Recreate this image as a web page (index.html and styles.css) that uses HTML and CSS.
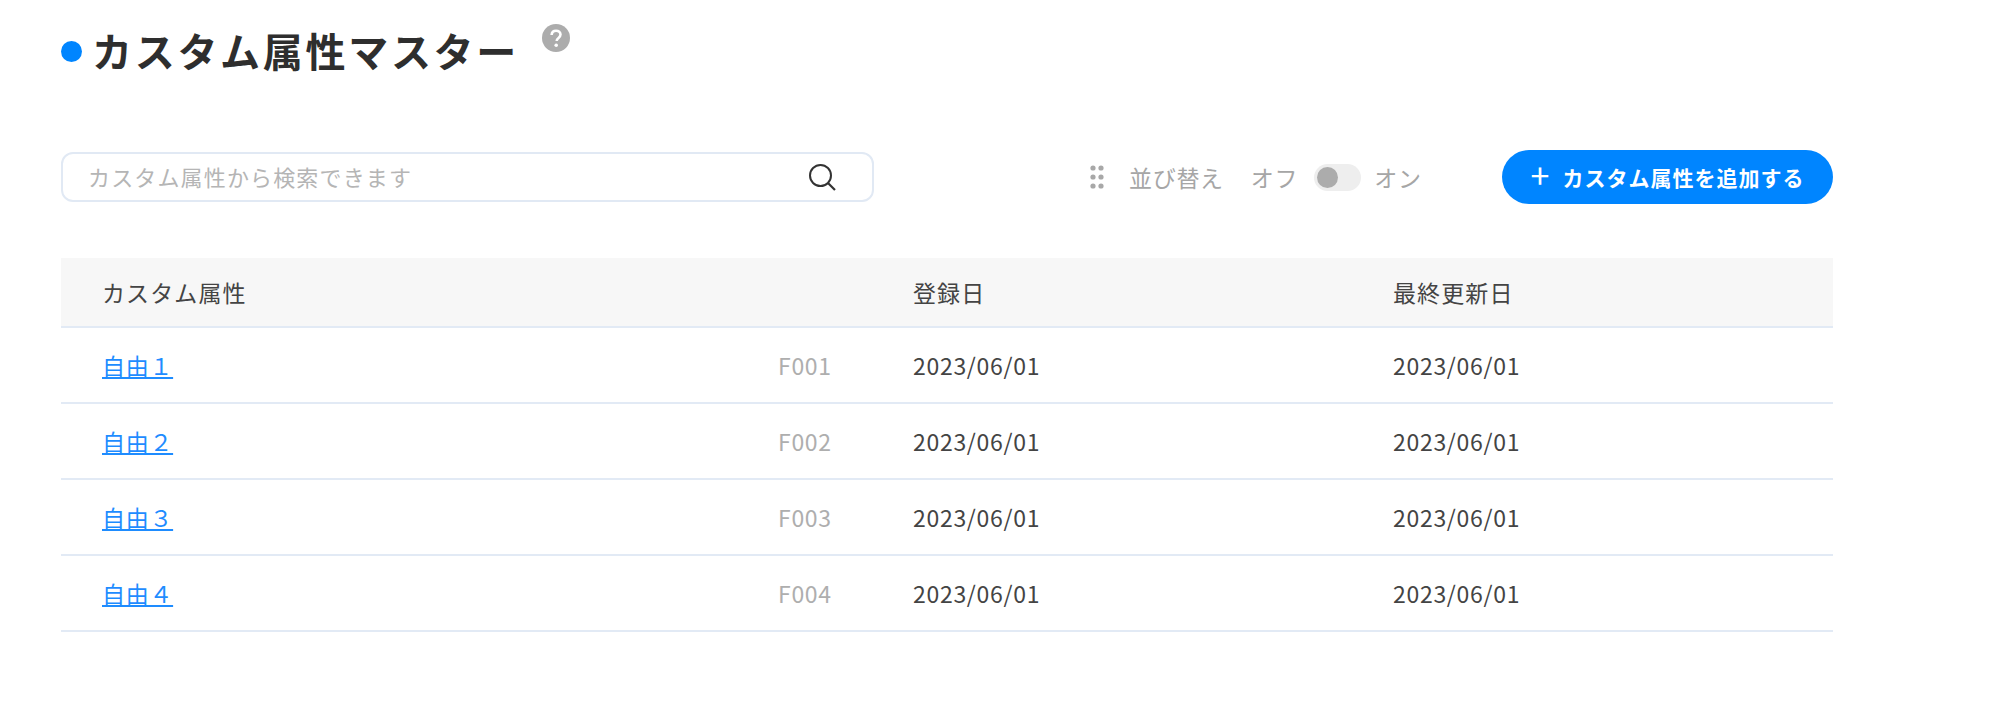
FILE: index.html
```html
<!DOCTYPE html>
<html lang="ja">
<head>
<meta charset="utf-8">
<title>カスタム属性マスター</title>
<link rel="stylesheet" href="styles.css">
</head>
<body>
<main class="page">
  <header class="title-row">
    <span class="dot"></span>
    <h1 class="title">カスタム属性マスター</h1>
    <svg class="help" viewBox="0 0 28 28" width="28" height="28"><circle cx="14" cy="14" r="14" fill="#acacac"/><path d="M9.6 11c.2-2.7 2-4.2 4.5-4.2s4.4 1.500 4.400 3.800c0 1.800-1 2.700-2.200 3.600-1.100.8-1.600 1.400-1.600 2.800" fill="none" stroke="#fff" stroke-width="2.600"/><circle cx="14.200" cy="21.200" r="1.800" fill="#fff"/></svg>
  </header>
  <section class="toolbar">
    <div class="search">
      <span class="placeholder">カスタム属性から検索できます</span>
      <svg class="search-icon" viewBox="0 0 30 30" width="30" height="30"><circle cx="13.500" cy="13.500" r="10.500" fill="none" stroke="#333" stroke-width="2"/><path d="M21 21l7 7" stroke="#333" stroke-width="2.200"/></svg>
    </div>
    <div class="sort">
      <svg class="grip" viewBox="0 0 14 24" width="14" height="24"><g fill="#a8a8a8"><circle cx="3" cy="3" r="2.600"/><circle cx="11" cy="3" r="2.600"/><circle cx="3" cy="12" r="2.600"/><circle cx="11" cy="12" r="2.600"/><circle cx="3" cy="21" r="2.600"/><circle cx="11" cy="21" r="2.600"/></g></svg>
      <span class="sort-label">並び替え</span>
      <span class="off">オフ</span>
      <span class="switch"><span class="knob"></span></span>
      <span class="on">オン</span>
    </div>
    <button class="add" type="button"><span class="plus">+</span>カスタム属性を追加する</button>
  </section>
  <section class="table">
    <div class="row head"><span class="c-name">カスタム属性</span><span class="c-code"></span><span class="c-date">登録日</span><span class="c-date">最終更新日</span></div>
    <div class="row"><a class="c-name link" href="#">自由１</a><span class="c-code">F001</span><span class="c-date">2023/06/01</span><span class="c-date">2023/06/01</span></div>
    <div class="row"><a class="c-name link" href="#">自由２</a><span class="c-code">F002</span><span class="c-date">2023/06/01</span><span class="c-date">2023/06/01</span></div>
    <div class="row"><a class="c-name link" href="#">自由３</a><span class="c-code">F003</span><span class="c-date">2023/06/01</span><span class="c-date">2023/06/01</span></div>
    <div class="row"><a class="c-name link" href="#">自由４</a><span class="c-code">F004</span><span class="c-date">2023/06/01</span><span class="c-date">2023/06/01</span></div>
  </section>
</main>
</body>
</html>
```
FILE: styles.css
```css
* { box-sizing: border-box; }
html, body { margin: 0; background: #fff; }
body {
  font-family: "Noto Sans CJK JP", "Noto Sans", sans-serif;
  color: #444;
  font-size: 23px;
  letter-spacing: 0.7px;
}
.page { width: 1772px; margin-left: 61px; }
.title-row { display: flex; align-items: flex-start; height: 150px; padding-top: 22px; }
.dot { width: 21px; height: 21px; border-radius: 50%; background: #0085ff; margin-top: 19px; margin-right: 10px; }
.title { margin: 0; font-size: 40px; line-height: 56px; font-weight: 700; letter-spacing: 2.7px; color: #2e2e2e; }
.help { margin-left: 23px; margin-top: 2px; }
.toolbar { display: flex; align-items: center; height: 54px; }
.search {
  width: 813px; height: 50px; border: 2px solid #e1e9f4; border-radius: 12px;
  display: flex; align-items: center; justify-content: space-between;
  padding: 0 35px 0 25px;
}
.placeholder { color: #b5b5b5; font-size: 22px; letter-spacing: 1.15px; margin-top: -2px; }
.sort { display: flex; align-items: center; margin-left: 216px; color: #a6a6a6; }
.grip { margin-right: 25px; }
.sort-label { margin-right: 27px; }
.switch { width: 47px; height: 27px; border-radius: 14px; background: #eee; margin: 0 13px 0 16px; display: flex; align-items: center; padding-left: 3px; }
.knob { width: 21px; height: 21px; border-radius: 50%; background: #acacac; }
.add {
  margin-left: auto; width: 331px; height: 54px; border: 0; border-radius: 27px;
  background: #0085ff; color: #fff; font: inherit; font-size: 21px; font-weight: 700; letter-spacing: 1px;
  display: flex; align-items: center; justify-content: center;
}
.plus { font-size: 34px; font-weight: 400; line-height: 1; margin-right: 12px; margin-top: -4px; }
.table { margin-top: 54px; }
.row { display: grid; grid-template-columns: 676px 135px 480px 1fr; align-items: center; height: 76px; border-bottom: 2px solid #e2eaf5; padding-left: 41px; }
.head { height: 70px; background: #f7f7f7; letter-spacing: 1.1px; }
.c-code { color: #aeaeae; }
.link { color: #1e8cff; justify-self: start; }
```
